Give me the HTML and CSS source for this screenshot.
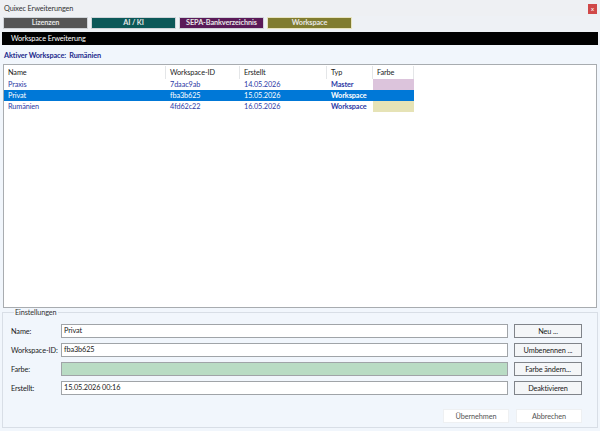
FILE: index.html
```html
<!DOCTYPE html>
<html lang="de">
<head>
  <meta charset="UTF-8">
  <title>Quixec Erweiterungen</title>
  <link rel="stylesheet" href="styles.css">
</head>
<body>

<div class="window">
  <div class="titlebar">
    <span class="title">Quixec Erweiterungen</span>
    <span class="close">x</span>
  </div>

  <div class="tabs">
    <div class="tab tab-lizenzen">Lizenzen</div>
    <div class="tab tab-ai">AI / KI</div>
    <div class="tab tab-sepa">SEPA-Bankverzeichnis</div>
    <div class="tab tab-workspace">Workspace</div>
  </div>

  <div class="section-bar">Workspace Erweiterung</div>

  <div class="content">
    <div class="active-ws">Aktiver Workspace:&nbsp; Rumänien</div>

    <div class="list">
      <div class="row head">
        <div>Name</div>
        <div>Workspace-ID</div>
        <div>Erstellt</div>
        <div>Typ</div>
        <div>Farbe</div>
      </div>
      <div class="row">
        <div>Praxis</div>
        <div>7daac9ab</div>
        <div>14.05.2026</div>
        <div class="bold">Master</div>
        <div class="swatch" style="background:#dcc4dc"></div>
      </div>
      <div class="row selected">
        <div>Privat</div>
        <div>fba3b625</div>
        <div>15.05.2026</div>
        <div class="bold">Workspace</div>
        <div class="swatch"></div>
      </div>
      <div class="row">
        <div>Rumänien</div>
        <div>4fd62c22</div>
        <div>16.05.2026</div>
        <div class="bold">Workspace</div>
        <div class="swatch" style="background:#e6e3b6"></div>
      </div>
    </div>

    <fieldset class="settings">
      <legend>Einstellungen</legend>
      <div class="field">
        <label>Name:</label>
        <div class="input">Privat</div>
        <button class="btn">Neu ...</button>
      </div>
      <div class="field">
        <label>Workspace-ID:</label>
        <div class="input">fba3b625</div>
        <button class="btn">Umbenennen ...</button>
      </div>
      <div class="field">
        <label>Farbe:</label>
        <div class="input color"></div>
        <button class="btn">Farbe ändern...</button>
      </div>
      <div class="field">
        <label>Erstellt:</label>
        <div class="input">15.05.2026 00:16</div>
        <button class="btn">Deaktivieren</button>
      </div>
      <div class="actions">
        <button class="btn flat">Übernehmen</button>
        <button class="btn flat">Abbrechen</button>
      </div>
    </fieldset>
  </div>
</div>

</body>
</html>
```

FILE: styles.css
```css
body {
  margin: 0;
  font-family: Lato, 'Open Sans', sans-serif;
  font-size: 7.3px;
  letter-spacing: -0.1px;
  color: #1a1a1a;
  background-color: #eef1f5;
}

.window {
  width: 600px;
  height: 431px;
  display: flex;
  flex-direction: column;
  overflow: hidden;
}

.titlebar {
  height: 16px;
  display: flex;
  align-items: center;
  justify-content: space-between;
  padding: 0 3px 0 4px;
  background-color: #eef0f3;
}

.title {
  color: #333;
}

.close {
  width: 9px;
  height: 10px;
  margin-top: 2px;
  background-color: #d04848;
  color: #fff;
  font-size: 6px;
  line-height: 10px;
  text-align: center;
}

.tabs {
  display: flex;
  gap: 3px;
  padding: 1px 3px 0;
  height: 12px;
}

.tab {
  width: 83px;
  border: 1px solid #d0d4d8;
  color: #e6e6e6;
  font-weight: bold;
  text-align: center;
  line-height: 10px;
  white-space: nowrap;
}

.tab-lizenzen { background-color: #555; }
.tab-ai { background-color: #0c5858; }
.tab-sepa { background-color: #5a1a58; }
.tab-workspace { background-color: #807c30; border-color: #e8e4c0; }

.section-bar {
  margin: 3px 2px 0;
  height: 13px;
  line-height: 13px;
  padding-left: 9px;
  background-color: #000;
  color: #fff;
}

.content {
  flex: 1;
  display: flex;
  flex-direction: column;
  background-color: #f1f6fc;
  padding: 0 2px 3px;
}

.active-ws {
  height: 19px;
  line-height: 22px;
  padding-left: 2px;
  font-weight: bold;
  color: #1c2a8c;
}

.list {
  height: 241px;
  margin: 0 1px;
  border: 1px solid #a8acb0;
  background-color: #fff;
  padding-top: 1px;
}

.row {
  display: grid;
  grid-template-columns: 162px 74px 87px 46px 41px;
  width: 410px;
  height: 11px;
  line-height: 11px;
  color: #2c3aa6;
}

.row > div {
  padding-left: 4px;
  white-space: nowrap;
  overflow: hidden;
}

.row.head {
  height: 13px;
  line-height: 13px;
  color: #222;
}

.row.head > div {
  border-right: 1px solid #e4e6e8;
}

.row.selected {
  background-color: #0078d7;
  color: #fff;
}

.bold {
  font-weight: bold;
}

.swatch {
  height: 100%;
}

.settings {
  flex: 1;
  margin: 0;
  border: 1px solid #d8dee6;
  padding: 7px 15px 0 8px;
  display: flex;
  flex-direction: column;
  gap: 5px;
}

.settings legend {
  padding: 0 1px;
  margin-left: 3px;
  color: #333;
}

.field {
  display: flex;
  align-items: center;
  height: 14px;
}

.field label {
  width: 50px;
  white-space: nowrap;
}

.input {
  flex: 1;
  height: 12px;
  line-height: 12px;
  padding-left: 2px;
  border: 1px solid #a0a4a8;
  background-color: #fff;
}

.input.color {
  background-color: #b9dcc4;
}

.btn {
  font-family: inherit;
  font-size: 7.3px;
  letter-spacing: -0.1px;
  color: #1a1a1a;
  width: 68px;
  height: 14px;
  padding: 0;
  margin-left: 6px;
  border: 1px solid #80848a;
  background-color: #f4f6f8;
}

.actions {
  display: flex;
  justify-content: flex-end;
  margin-top: 9px;
}

.btn.flat {
  width: 66px;
  margin-left: 7px;
  border-color: #eef0f2;
  background-color: #fff;
  color: #555;
}
```
